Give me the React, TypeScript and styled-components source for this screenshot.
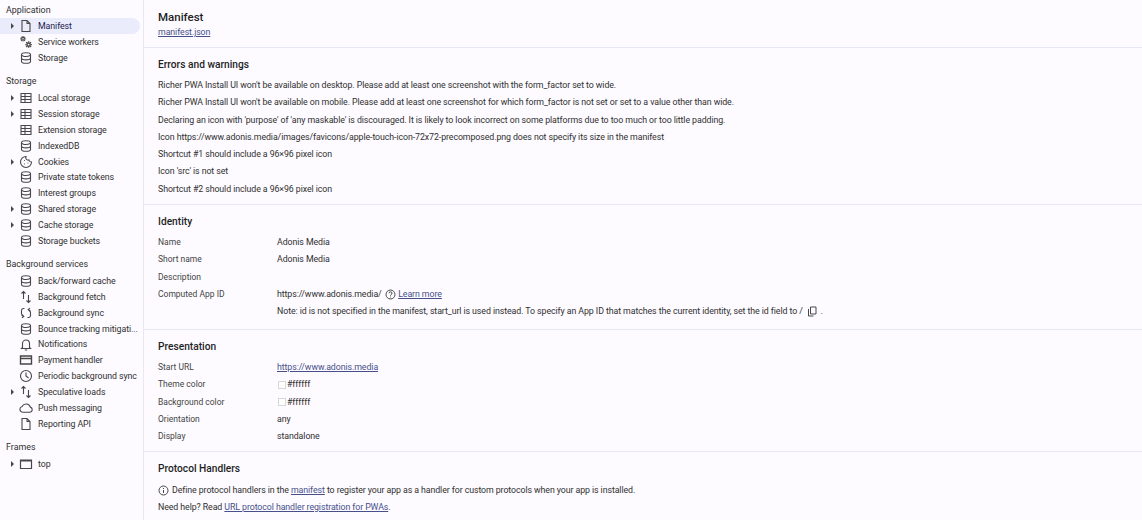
import React from "react";
import styled, { createGlobalStyle } from "styled-components";

const GlobalStyle = createGlobalStyle`
  html, body {
    margin: 0;
    padding: 0;
    background: #fdfbff;
  }
  body {
    font-family: Roboto, "Open Sans", sans-serif;
    color: #1f1f1f;
    overflow: hidden;
  }
`;

const Page = styled.div`
  display: flex;
  width: 1142px;
  height: 520px;
  overflow: hidden;
  background: #fdfbff;
`;

const Sidebar = styled.nav`
  flex: 0 0 144px;
  height: 520px;
  padding-top: 2.5px;
  box-sizing: border-box;
  border-right: 1px solid #e6e8f4;
`;

const Group = styled.div`
  margin-bottom: 8.6px;
`;

const GroupTitle = styled.div`
  height: 15.85px;
  line-height: 15.85px;
  padding-left: 6px;
  font-size: 8.9px;
  color: #303030;
`;

const Row = styled.div<{ $selected?: boolean }>`
  display: flex;
  align-items: center;
  height: 15.85px;
  margin-right: 3px;
  border-radius: 0 8px 8px 0;
  background: ${props => (props.$selected ? "#ebecfb" : "transparent")};
  color: ${props => (props.$selected ? "#1a1c50" : "#303030")};
  font-size: 8.8px;
  letter-spacing: -0.08px;
  white-space: nowrap;
`;

const Arrow = styled.span<{ $show?: boolean }>`
  flex: 0 0 0;
  width: 0;
  height: 0;
  margin: 0 10.5px 0 10.5px;
  border-top: 3px solid transparent;
  border-bottom: 3px solid transparent;
  border-left: 3.5px solid ${props => (props.$show ? "#474747" : "transparent")};
`;

const IconBox = styled.svg`
  flex: 0 0 14px;
  width: 14px;
  height: 14px;
  margin: 0 5px 0 -5px;
  fill: none;
  stroke: #474747;
  stroke-width: 1.1;
`;

const Main = styled.main`
  flex: 1;
  min-width: 0;
`;

const Header = styled.header`
  height: 48px;
  box-sizing: border-box;
  padding: 10px 0 0 14px;
  border-bottom: 1px solid #e6e8f4;
`;

const PageTitle = styled.h1`
  margin: 0;
  font-size: 11.5px;
  line-height: 15px;
  font-weight: 500;
  color: #1f1f1f;
`;

const HeaderLink = styled.a`
  display: block;
  font-size: 8.8px;
  letter-spacing: -0.08px;
  line-height: 14px;
  color: #474f8a;
  text-decoration: underline;
`;

const Section = styled.section<{ $height: number; $last?: boolean }>`
  height: ${props => props.$height}px;
  box-sizing: border-box;
  padding: 8px 0 0 14px;
  border-bottom: ${props => (props.$last ? "none" : "1px solid #e6e8f4")};
`;

const SectionTitle = styled.h2<{ $gap?: number }>`
  margin: 0 0 ${props => props.$gap ?? 4}px;
  height: 17px;
  line-height: 17px;
  font-size: 10.2px;
  font-weight: 500;
  color: #1f1f1f;
`;

const Line = styled.div`
  height: 17.3px;
  line-height: 17.3px;
  font-size: 8.8px;
  letter-spacing: -0.085px;
  white-space: nowrap;
  color: #303030;
  display: flex;
  align-items: center;
`;

const Field = styled.div`
  display: grid;
  grid-template-columns: 119px 1fr;
  height: 17.3px;
  line-height: 17.3px;
  font-size: 8.8px;
  letter-spacing: -0.08px;
  white-space: nowrap;
`;

const FieldLabel = styled.div`
  font-size: 8.5px;
  letter-spacing: 0;
  color: #444;
`;

const FieldValue = styled.div`
  display: flex;
  align-items: center;
  color: #303030;
`;

const TextLink = styled.a`
  color: #474f8a;
  text-decoration: underline;
`;

const Swatch = styled.span`
  width: 6px;
  height: 6px;
  margin: 0 1px 0 1px;
  background: #fff;
  border: 1px solid #d8d8d8;
`;

const SmallIcon = styled.svg<{ $before?: number; $after?: number }>`
  flex: 0 0 auto;
  width: 11px;
  height: 11px;
  margin: 0 ${props => props.$after ?? 3}px 0 ${props => props.$before ?? 4}px;
  fill: none;
  stroke: #474747;
  stroke-width: 1;
`;

type IconName = "doc" | "gears" | "db" | "table" | "cookie" | "updown" | "sync" | "bell" | "card" | "clock" | "cloud" | "frame";

const gearPath = "M0 -2.6v1M0 1.6v1M-2.6 0h1M1.6 0h1M-1.9 -1.9l.7 .7M1.2 1.2l.7 .7M-1.9 1.9l.7 -.7M1.2 -1.2l.7 -.7";

const iconPaths: Record<IconName, React.ReactNode> = {
  doc: <path d="M3 1.5h5l3 3v8H3zM8 1.5v3h3" />,
  gears: (
    <>
      <g transform="translate(4 3.8) scale(1.05)">
        <circle r="1.3" />
        <path d={gearPath} />
      </g>
      <g transform="translate(9.6 9.6) scale(1.25)">
        <circle r="1.3" />
        <path d={gearPath} />
      </g>
    </>
  ),
  db: (
    <>
      <ellipse cx="7" cy="3.6" rx="4.5" ry="1.9" />
      <path d="M2.5 3.6v6.8c0 1 2 1.9 4.5 1.9s4.5-.9 4.5-1.9V3.6M2.5 7c0 1 2 1.9 4.5 1.9s4.5-.9 4.5-1.9" />
    </>
  ),
  table: <path d="M2 2.5h10v9H2zM2 5.5h10M2 8.5h10M6 2.5v9" />,
  cookie: (
    <>
      <path d="M7 1.5a5.5 5.5 0 1 0 5.5 5.5 2.5 2.5 0 0 1-2.5-2 2.5 2.5 0 0 1-3-3.5z" />
      <path d="M5 5.5h.8M8.5 8h.8M5 9h.8" />
    </>
  ),
  updown: <path d="M4.5 9V1.5M2.5 3.5l2-2 2 2M9.5 5v7.5M7.5 10.5l2 2 2-2" />,
  sync: <path d="M5.5 2.5H4.2A2 2 0 0 0 2.5 4.5v3c0 1.4.9 2.4 2.2 2.7M3.2 8.6l1.6 1.8-1.8 1.4M8.5 11.5h1.3a2 2 0 0 0 1.7-2v-3c0-1.4-.9-2.4-2.2-2.7M10.8 5.4 9.2 3.6 11 2.2" />,
  bell: <path d="M3.5 10.5V6.5a3.5 3.5 0 0 1 7 0v4l1 1h-9zM5.8 13h2.4" />,
  card: <path d="M1.5 3h11v8h-11zM1.5 5.5h11" strokeWidth="1.4" />,
  clock: (
    <>
      <circle cx="7" cy="7" r="5.5" />
      <path d="M7 3.5V7l2.5 2" />
    </>
  ),
  cloud: <path d="M3.6 11.2h7a2.6 2.6 0 0 0 .7-5.1 4.4 4.4 0 0 0-8.2-.6A2.9 2.9 0 0 0 3.6 11.2z" />,
  frame: <path d="M1.5 3h11v8.5h-11zM1.5 3.8h11" strokeWidth="1.2" />,
};

type NavItem = { label: string; icon: IconName; arrow?: boolean; selected?: boolean };

const navGroups: { title: string; items: NavItem[] }[] = [
  {
    title: "Application",
    items: [
      { label: "Manifest", icon: "doc", arrow: true, selected: true },
      { label: "Service workers", icon: "gears" },
      { label: "Storage", icon: "db" },
    ],
  },
  {
    title: "Storage",
    items: [
      { label: "Local storage", icon: "table", arrow: true },
      { label: "Session storage", icon: "table", arrow: true },
      { label: "Extension storage", icon: "table" },
      { label: "IndexedDB", icon: "db" },
      { label: "Cookies", icon: "cookie", arrow: true },
      { label: "Private state tokens", icon: "db" },
      { label: "Interest groups", icon: "db" },
      { label: "Shared storage", icon: "db", arrow: true },
      { label: "Cache storage", icon: "db", arrow: true },
      { label: "Storage buckets", icon: "db" },
    ],
  },
  {
    title: "Background services",
    items: [
      { label: "Back/forward cache", icon: "db" },
      { label: "Background fetch", icon: "updown" },
      { label: "Background sync", icon: "sync" },
      { label: "Bounce tracking mitigati...", icon: "db" },
      { label: "Notifications", icon: "bell" },
      { label: "Payment handler", icon: "card" },
      { label: "Periodic background sync", icon: "clock" },
      { label: "Speculative loads", icon: "updown", arrow: true },
      { label: "Push messaging", icon: "cloud" },
      { label: "Reporting API", icon: "doc" },
    ],
  },
  {
    title: "Frames",
    items: [{ label: "top", icon: "frame", arrow: true }],
  },
];

const errors = [
  "Richer PWA Install UI won't be available on desktop. Please add at least one screenshot with the form_factor set to wide.",
  "Richer PWA Install UI won't be available on mobile. Please add at least one screenshot for which form_factor is not set or set to a value other than wide.",
  "Declaring an icon with 'purpose' of 'any maskable' is discouraged. It is likely to look incorrect on some platforms due to too much or too little padding.",
  "Icon https://www.adonis.media/images/favicons/apple-touch-icon-72x72-precomposed.png does not specify its size in the manifest",
  "Shortcut #1 should include a 96×96 pixel icon",
  "Icon 'src' is not set",
  "Shortcut #2 should include a 96×96 pixel icon",
];

export default function App() {
  return (
    <Page>
      <GlobalStyle />
      <Sidebar>
        {navGroups.map(group => (
          <Group key={group.title}>
            <GroupTitle>{group.title}</GroupTitle>
            {group.items.map(item => (
              <Row key={item.label} $selected={item.selected}>
                <Arrow $show={item.arrow} />
                <IconBox viewBox="0 0 14 14">{iconPaths[item.icon]}</IconBox>
                {item.label}
              </Row>
            ))}
          </Group>
        ))}
      </Sidebar>
      <Main>
        <Header>
          <PageTitle>Manifest</PageTitle>
          <HeaderLink>manifest.json</HeaderLink>
        </Header>
        <Section $height={157}>
          <SectionTitle>Errors and warnings</SectionTitle>
          {errors.map(text => (
            <Line key={text}>{text}</Line>
          ))}
        </Section>
        <Section $height={125}>
          <SectionTitle>Identity</SectionTitle>
          <Field><FieldLabel>Name</FieldLabel><FieldValue>Adonis Media</FieldValue></Field>
          <Field><FieldLabel>Short name</FieldLabel><FieldValue>Adonis Media</FieldValue></Field>
          <Field><FieldLabel>Description</FieldLabel><FieldValue /></Field>
          <Field>
            <FieldLabel>Computed App ID</FieldLabel>
            <FieldValue>
              https://www.adonis.media/
              <SmallIcon viewBox="0 0 11 11" $before={3} $after={2.5}>
                <circle cx="5.5" cy="5.5" r="4.5" />
                <path d="M4 4.3a1.5 1.5 0 1 1 2 1.4c-.4.2-.5.5-.5 1M5.5 7.6v.8" />
              </SmallIcon>
              <TextLink>Learn more</TextLink>
            </FieldValue>
          </Field>
          <Field>
            <FieldLabel />
            <FieldValue>
              Note: id is not specified in the manifest, start_url is used instead. To specify an App ID that matches the current identity, set the id field to /
              <SmallIcon viewBox="0 0 11 11">
                <path d="M3.5 1h5.5v7h-5.5zM1.5 3v7h5" />
              </SmallIcon>
              .
            </FieldValue>
          </Field>
        </Section>
        <Section $height={122}>
          <SectionTitle>Presentation</SectionTitle>
          <Field><FieldLabel>Start URL</FieldLabel><FieldValue><TextLink>https://www.adonis.media</TextLink></FieldValue></Field>
          <Field><FieldLabel>Theme color</FieldLabel><FieldValue><Swatch />#ffffff</FieldValue></Field>
          <Field><FieldLabel>Background color</FieldLabel><FieldValue><Swatch />#ffffff</FieldValue></Field>
          <Field><FieldLabel>Orientation</FieldLabel><FieldValue>any</FieldValue></Field>
          <Field><FieldLabel>Display</FieldLabel><FieldValue>standalone</FieldValue></Field>
        </Section>
        <Section $height={68} $last>
          <SectionTitle $gap={4.5}>Protocol Handlers</SectionTitle>
          <Line>
            <SmallIcon viewBox="0 0 11 11" $before={0}>
              <circle cx="5.5" cy="5.5" r="4.5" />
              <path d="M5.5 5v3M5.5 3v1" />
            </SmallIcon>
            Define protocol handlers in the&nbsp;<TextLink>manifest</TextLink>&nbsp;to register your app as a handler for custom protocols when your app is installed.
          </Line>
          <Line>Need help? Read&nbsp;<TextLink>URL protocol handler registration for PWAs</TextLink>.</Line>
        </Section>
      </Main>
    </Page>
  );
}
